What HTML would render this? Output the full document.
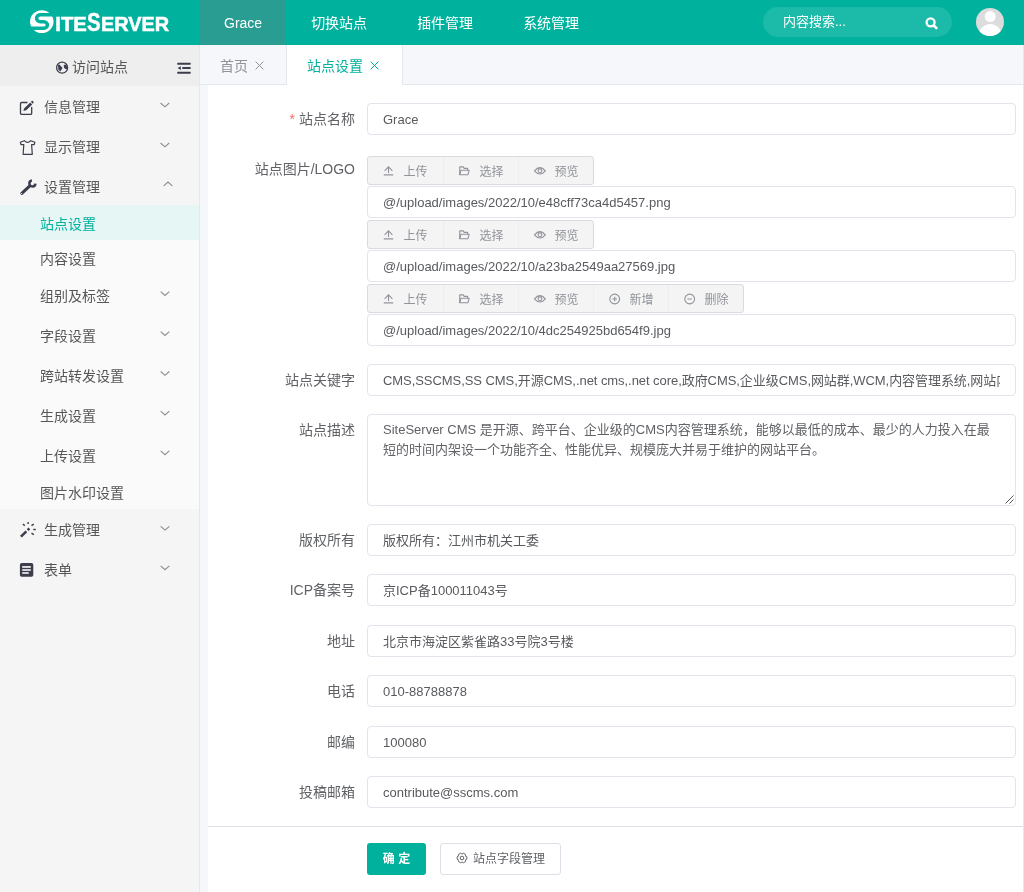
<!DOCTYPE html>
<html lang="zh-CN">
<head>
<meta charset="utf-8">
<title>SiteServer</title>
<style>
*{box-sizing:border-box;margin:0;padding:0}
html,body{width:1024px;height:892px;overflow:hidden;background:#fff}
body{font-family:"Liberation Sans","Noto Sans CJK SC",sans-serif;font-size:14px;color:#606266;position:relative}
#hd,#sb,#tabs,#main,#sbic{will-change:transform}
/* header */
#hd{position:absolute;left:0;top:0;width:1024px;height:45px;background:#00b19d;color:#fff}
#logo{position:absolute;left:0;top:0;width:200px;height:45px}
#nav{position:absolute;left:199px;top:0;height:45px;display:flex}
#nav div{height:45px;line-height:47px;padding:0 25px;font-size:14px;color:#fff;white-space:nowrap}
#nav div.on{background:#2a9d92;padding:0 24px 0 25px}
#search{position:absolute;left:763px;top:7px;width:189px;height:30px;border-radius:15px;background:#1cbaa8;color:#fff;font-size:13px;line-height:30px;padding-left:20px}
#search svg{position:absolute;left:162px;top:10px}
#avatar{position:absolute;left:976px;top:8px;width:28px;height:28px;border-radius:50%;background:#dcdcdc;overflow:hidden}
/* sidebar */
#sb{position:absolute;left:0;top:45px;width:200px;height:847px;background:#f5f5f5;border-right:1px solid #e4e7f0}
#sbtop{position:relative;height:41px;margin-bottom:-1px;background:#eeeeee;line-height:45px;font-size:14px;color:#555}
#sbtop .t{position:absolute;left:72px;top:0}
#sbtop svg.g{position:absolute;left:56px;top:16px}
#sbtop svg.m{position:absolute;left:177px;top:18px}
.mi{position:relative;height:40px;line-height:44px;font-size:14px;color:#565656;padding-left:44px}
.mi svg.ic{position:absolute;left:19px;top:14px}
.mi svg.ar{position:absolute;left:160px;top:15px}
#sub{background:#fafafa}
.si{position:relative;height:40px;line-height:44px;font-size:14px;color:#565656;padding-left:40px}
.si.s{height:35px;line-height:39px}
.si.on{background:#e6f6f5;color:#00b19d}
.si svg.ar{position:absolute;left:160px;top:15px}
/* tabs */
#tabs{position:absolute;left:200px;top:45px;width:824px;height:40px;background:#f5f7fa;border-bottom:1px solid #e4e7ed}
#tabs .tb{position:absolute;top:0;height:40px;line-height:42px;font-size:14px;color:#909399;padding-left:20px}
#tabs .tb.on{background:#fff;color:#00b19d;border-left:1px solid #e4e7ed;border-right:1px solid #e4e7ed;height:41px}
#tabs .x{position:relative;top:-1px;margin-left:7px}
/* main */
#gap{position:absolute;left:200px;top:85px;width:8px;height:807px;background:#f5f7fa}
#main{position:absolute;left:208px;top:85px;width:816px;height:807px;background:#fff}
.lb{position:absolute;left:0;width:147px;text-align:right;font-size:14px;color:#606266;line-height:32px;white-space:nowrap}
.lb i{color:#f56c6c;font-style:normal;margin-right:4px}
.in{position:absolute;left:159px;width:649px;height:32px;border:1px solid #e1e4eb;border-radius:4px;background:#fff;font-size:13px;line-height:31px;padding:0 15px;color:#585a5e;white-space:nowrap;overflow:hidden}
.bg{position:absolute;left:159px;height:29px;display:flex;border:1px solid #dadbde;border-radius:3px;background:#f4f4f5;overflow:hidden}
.bg div{width:75px;height:27px;line-height:31px;font-size:12px;color:#909399;position:relative;padding-left:35.5px;border-left:1px solid #eeeef0}
.bg div:first-child{border-left:0}
.bg div svg{position:absolute;left:14.5px;top:8px}
#ta{position:absolute;left:159px;top:329px;width:649px;height:92px;border:1px solid #e1e4eb;border-radius:4px;font-size:13px;line-height:19.5px;padding:5px 15px;color:#606266}
#hr{position:absolute;left:0;top:741px;width:815px;height:1px;background:#dcdfe6}
#ok{position:absolute;left:159px;top:758px;width:59px;height:32px;background:#00b19d;border-radius:3px;color:#fff;font-size:12px;line-height:32px;text-align:center;font-weight:bold}
#fm{position:absolute;left:232px;top:758px;width:121px;height:32px;border:1px solid #dcdfe6;border-radius:3px;color:#606266;font-size:12px;line-height:30px;padding-left:32px;background:#fff}
#fm svg{position:absolute;left:15.2px;top:8.2px}
</style>
</head>
<body>
<div id="hd">
  <div id="logo">
    <svg width="200" height="45" viewBox="0 0 200 45">
      <g>
        <ellipse cx="41.8" cy="21.6" rx="11.75" ry="11.4" fill="#fff"/>
        <path d="M54 14.86 H40.35 A3.77 3.41 0 0 0 40.35 21.68 H43.94 A3.66 3.25 0 0 1 43.94 28.17 H29" fill="none" stroke="#00b19d" stroke-width="3.5"/>
      </g>
      <text x="55.3" y="30.6" font-family="Liberation Sans, sans-serif" font-weight="bold" font-size="19.6" fill="#fff" stroke="#fff" stroke-width="0.5" textLength="31.6" lengthAdjust="spacingAndGlyphs">ITE</text>
      <text x="87.1" y="30.7" font-family="Liberation Sans, sans-serif" font-weight="bold" font-size="25" fill="#fff" stroke="#fff" stroke-width="0.4" textLength="13.6" lengthAdjust="spacingAndGlyphs">S</text>
      <text x="100.9" y="30.6" font-family="Liberation Sans, sans-serif" font-weight="bold" font-size="19.6" fill="#fff" stroke="#fff" stroke-width="0.5" textLength="68.2" lengthAdjust="spacingAndGlyphs">ERVER</text>
    </svg>
  </div>
  <div id="nav"><div class="on">Grace</div><div>切换站点</div><div>插件管理</div><div>系统管理</div></div>
  <div id="search">内容搜索...<svg width="13" height="13" viewBox="0 0 13 13"><circle cx="5.6" cy="5.3" r="4" fill="none" stroke="#fff" stroke-width="2.3"/><path d="M8.8 8.5 L11.4 11.1" stroke="#fff" stroke-width="2.6" stroke-linecap="round"/></svg></div>
  <div id="avatar"><svg width="28" height="28" viewBox="0 0 28 28"><circle cx="14.2" cy="8.6" r="5.5" fill="#fff"/><ellipse cx="14.2" cy="28" rx="11.5" ry="12.1" fill="#fff"/></svg></div>
</div>

<div id="sb">
  <div id="sbtop"><span class="t">访问站点</span></div>
  <div class="mi">信息管理</div>
  <div class="mi">显示管理</div>
  <div class="mi">设置管理</div>
  <div id="sub">
    <div class="si s on">站点设置</div>
    <div class="si s" style="height:34px">内容设置</div>
    <div class="si">组别及标签</div>
    <div class="si">字段设置</div>
    <div class="si">跨站转发设置</div>
    <div class="si">生成设置</div>
    <div class="si">上传设置</div>
    <div class="si s" style="height:35px">图片水印设置</div>
  </div>
  <div class="mi" style="height:39px;line-height:42px">生成管理</div>
  <div class="mi">表单</div>
</div>

<svg id="sbic" width="200" height="892" viewBox="0 0 200 892" style="position:absolute;left:0;top:0;pointer-events:none">
  <!-- globe -->
  <g fill="none" stroke="#3c3e4d" stroke-width="1.3">
    <circle cx="62.1" cy="67.7" r="5.5"/>
  </g>
  <path d="M57.9 65.2 L59.4 64.6 L62.6 68.1 L60.2 71.4 L58.4 69.4 Z" fill="#3c3e4d"/>
  <path d="M63.7 65 L66.4 64.4 L67.4 68.9 L65.4 68.9 L64 67.4 Z" fill="#3c3e4d"/>
  <!-- fold -->
  <g fill="#3c3e4d">
    <rect x="177.2" y="62.7" width="13.5" height="2" rx="0.6"/>
    <rect x="182.2" y="67.1" width="8.5" height="2" rx="0.6"/>
    <rect x="177.2" y="71.7" width="13.5" height="2" rx="0.6"/>
    <path d="M177.6 68.1 L180.8 66.2 L180.8 70 Z"/>
  </g>
  <!-- edit -->
  <path d="M27 102.5 H21.6 a1.1 1.1 0 0 0 -1.1 1.1 V113.2 a1.1 1.1 0 0 0 1.1 1.1 H30.6 a1.1 1.1 0 0 0 1.1 -1.1 V107.5" fill="none" stroke="#3c3e4d" stroke-width="1.3" stroke-linecap="round"/>
  <path d="M23.3 110.9 L24.3 108.2 L30.2 102.5 L32.2 104.5 L26.2 110.2 Z" fill="#3c3e4d"/>
  <path d="M30.9 101.8 L31.7 101.1 a0.9 0.9 0 0 1 1.2 0 L33.4 101.7 a0.9 0.9 0 0 1 0 1.2 L32.8 103.7 Z" fill="#3c3e4d"/>
  <!-- shirt -->
  <path d="M24.4 140.7 Q27.6 144.2 30.7 140.7 L34.9 142.2 L34.2 144.7 L31.6 144.6 L32.3 154.3 H23.1 L23.8 144.6 L21 144.7 L20.3 142.2 Z" fill="none" stroke="#3c3e4d" stroke-width="1.2" stroke-linejoin="round"/>
  <!-- wrench -->
  <path d="M21.8 193.3 L29.8 185.8" stroke="#3c3e4d" stroke-width="3.1" stroke-linecap="round" fill="none"/>
  <path d="M31.9 180.5 A3 3 0 1 0 35.4 183.6" stroke="#3c3e4d" stroke-width="2.5" fill="none"/>
  <circle cx="21.6" cy="193.5" r="0.6" fill="#f5f5f5"/>
  <!-- wand -->
  <path d="M20.9 536.7 L26.4 531.4" stroke="#3c3e4d" stroke-width="2.5" fill="none"/>
  <path d="M28.5 527.6 L30.2 529.3 L28.5 531 L26.8 529.3 Z" fill="#3c3e4d"/>
  <g stroke="#3c3e4d" stroke-width="1.4" fill="none">
    <path d="M28.1 522.1 V524"/>
    <path d="M22.9 524.1 L24.8 525.6"/>
    <path d="M31.5 525.6 L33.7 524.1"/>
    <path d="M33.2 529.5 H35.8"/>
    <path d="M31.5 533.2 L33.8 534.7"/>
  </g>
  <!-- form -->
  <rect x="19.9" y="563.1" width="13.4" height="13.6" rx="1.8" fill="#3c3e4d"/>
  <g fill="#f5f5f5">
    <rect x="22.2" y="566.1" width="8.6" height="1.7"/>
    <rect x="22.2" y="569.2" width="8.6" height="1.6"/>
    <rect x="22.2" y="572.2" width="6.6" height="1.6"/>
  </g>
  <!-- chevrons -->
  <g fill="none" stroke="#8a8c91" stroke-width="1.1">
    <path d="M160.6 103.0 L164.9 106.80000000000001 L169.20000000000002 103.0"/><path d="M160.6 143.0 L164.9 146.8 L169.20000000000002 143.0"/><path d="M163.7 185.9 L168 182.1 L172.3 185.9"/>
    <path d="M160.7 291.6 L165 295.4 L169.3 291.6"/><path d="M160.7 331.6 L165 335.4 L169.3 331.6"/><path d="M160.7 371.5 L165 375.29999999999995 L169.3 371.5"/><path d="M160.7 411.20000000000005 L165 415.0 L169.3 411.20000000000005"/><path d="M160.7 450.90000000000003 L165 454.7 L169.3 450.90000000000003"/>
    <path d="M160.7 526.3000000000001 L165 530.1 L169.3 526.3000000000001"/><path d="M160.7 565.9 L165 569.6999999999999 L169.3 565.9"/>
  </g>
</svg>
<div id="tabs">
  <div class="tb" style="left:0;width:86px">首页<svg class="x" width="9" height="9" viewBox="0 0 9 9"><path d="M0.6 0.6 L8.4 8.4 M8.4 0.6 L0.6 8.4" stroke="#909399" stroke-width="1" fill="none"/></svg></div>
  <div class="tb on" style="left:86px;width:117px">站点设置<svg class="x" width="9" height="9" viewBox="0 0 9 9"><path d="M0.6 0.6 L8.4 8.4 M8.4 0.6 L0.6 8.4" stroke="#00b19d" stroke-width="1" fill="none"/></svg></div>
</div>
<div id="gap"></div><div style="position:absolute;left:1023px;top:45px;width:1px;height:847px;background:#e4e7ed;z-index:5"></div>
<div id="main">
  <div class="lb" style="top:18px"><i>*</i>站点名称</div>
  <div class="in" style="top:18px">Grace</div>

  <div class="lb" style="top:68px">站点图片/LOGO</div>
  <div class="bg" style="top:71px"><div><svg width="12" height="12" viewBox="0 0 12 12" fill="none" stroke="#909399" stroke-width="1.1"><path d="M0.8 9.9 H10.2"/><path d="M5.5 1.9 V8"/><path d="M1.6 5.8 L5.5 1.9 L9.4 5.8"/></svg>上传</div><div><svg width="12" height="12" viewBox="0 0 12 12" fill="none" stroke="#909399" stroke-width="1.1" stroke-linejoin="round"><path d="M0.7 9.8 V1.9 H4.2 L5.2 3.4 H8.6 V5.2"/><path d="M0.7 9.8 L2 5.2 H10.2 L8.9 9.8 Z"/></svg>选择</div><div><svg width="12" height="12" viewBox="0 0 12 12" fill="none" stroke="#909399" stroke-width="1.1"><path d="M0.4 5.8 Q5.9 -0.6 11.4 5.8 Q5.9 12.2 0.4 5.8 Z"/><circle cx="5.9" cy="5.8" r="1.9"/></svg>预览</div></div>
  <div class="in" style="top:101px">@/upload/images/2022/10/e48cff73ca4d5457.png</div>
  <div class="bg" style="top:135px"><div><svg width="12" height="12" viewBox="0 0 12 12" fill="none" stroke="#909399" stroke-width="1.1"><path d="M0.8 9.9 H10.2"/><path d="M5.5 1.9 V8"/><path d="M1.6 5.8 L5.5 1.9 L9.4 5.8"/></svg>上传</div><div><svg width="12" height="12" viewBox="0 0 12 12" fill="none" stroke="#909399" stroke-width="1.1" stroke-linejoin="round"><path d="M0.7 9.8 V1.9 H4.2 L5.2 3.4 H8.6 V5.2"/><path d="M0.7 9.8 L2 5.2 H10.2 L8.9 9.8 Z"/></svg>选择</div><div><svg width="12" height="12" viewBox="0 0 12 12" fill="none" stroke="#909399" stroke-width="1.1"><path d="M0.4 5.8 Q5.9 -0.6 11.4 5.8 Q5.9 12.2 0.4 5.8 Z"/><circle cx="5.9" cy="5.8" r="1.9"/></svg>预览</div></div>
  <div class="in" style="top:165px">@/upload/images/2022/10/a23ba2549aa27569.jpg</div>
  <div class="bg" style="top:199px"><div><svg width="12" height="12" viewBox="0 0 12 12" fill="none" stroke="#909399" stroke-width="1.1"><path d="M0.8 9.9 H10.2"/><path d="M5.5 1.9 V8"/><path d="M1.6 5.8 L5.5 1.9 L9.4 5.8"/></svg>上传</div><div><svg width="12" height="12" viewBox="0 0 12 12" fill="none" stroke="#909399" stroke-width="1.1" stroke-linejoin="round"><path d="M0.7 9.8 V1.9 H4.2 L5.2 3.4 H8.6 V5.2"/><path d="M0.7 9.8 L2 5.2 H10.2 L8.9 9.8 Z"/></svg>选择</div><div><svg width="12" height="12" viewBox="0 0 12 12" fill="none" stroke="#909399" stroke-width="1.1"><path d="M0.4 5.8 Q5.9 -0.6 11.4 5.8 Q5.9 12.2 0.4 5.8 Z"/><circle cx="5.9" cy="5.8" r="1.9"/></svg>预览</div><div><svg width="12" height="12" viewBox="0 0 12 12" fill="none" stroke="#909399" stroke-width="1.1"><circle cx="5.7" cy="6" r="4.9"/><path d="M3.4 6 H8 M5.7 3.7 V8.3"/></svg>新增</div><div><svg width="12" height="12" viewBox="0 0 12 12" fill="none" stroke="#909399" stroke-width="1.1"><circle cx="5.7" cy="6" r="4.9"/><path d="M3.4 6 H8"/></svg>删除</div></div>
  <div class="in" style="top:229px">@/upload/images/2022/10/4dc254925bd654f9.jpg</div>

  <div class="lb" style="top:279px">站点关键字</div>
  <div class="in" style="top:279px"><div style="overflow:hidden;width:617px;letter-spacing:-0.06px">CMS,SSCMS,SS CMS,开源CMS,.net cms,.net core,政府CMS,企业级CMS,网站群,WCM,内容管理系统,网站内容管理系统</div></div>

  <div class="lb" style="top:329px">站点描述</div>
  <div id="ta">SiteServer CMS 是开源、跨平台、企业级的CMS内容管理系统，能够以最低的成本、最少的人力投入在最短的时间内架设一个功能齐全、性能优异、规模庞大并易于维护的网站平台。<svg width="10" height="10" viewBox="0 0 10 10" style="position:absolute;right:1px;bottom:1px"><path d="M1.5 9.5 L9.5 1.5 M5.5 9.5 L9.5 5.5" stroke="#555" stroke-width="1" fill="none"/></svg></div>

  <div class="lb" style="top:439px">版权所有</div>
  <div class="in" style="top:439px">版权所有：江州市机关工委</div>
  <div class="lb" style="top:489px">ICP备案号</div>
  <div class="in" style="top:489px">京ICP备100011043号</div>
  <div class="lb" style="top:540px">地址</div>
  <div class="in" style="top:540px">北京市海淀区紫雀路33号院3号楼</div>
  <div class="lb" style="top:590px">电话</div>
  <div class="in" style="top:590px">010-88788878</div>
  <div class="lb" style="top:641px">邮编</div>
  <div class="in" style="top:641px">100080</div>
  <div class="lb" style="top:691px">投稿邮箱</div>
  <div class="in" style="top:691px">contribute@sscms.com</div>

  <div id="hr"></div>
  <div id="ok">确 定</div>
  <div id="fm"><svg width="12" height="12" viewBox="0 0 12 12" fill="none" stroke="#606266" stroke-width="1"><path d="M9.29 4.10 Q10.18 3.96 10.85 4.79 L10.85 7.21 Q10.18 8.04 9.29 7.90 Q9.86 8.60 9.47 9.60 L7.38 10.81 Q6.32 10.64 6.00 9.80 Q5.68 10.64 4.62 10.81 L2.53 9.60 Q2.14 8.60 2.71 7.90 Q1.82 8.04 1.15 7.21 L1.15 4.79 Q1.82 3.96 2.71 4.10 Q2.14 3.40 2.53 2.40 L4.62 1.19 Q5.68 1.36 6.00 2.20 Q6.32 1.36 7.38 1.19 L9.47 2.40 Q9.86 3.40 9.29 4.10 Z" stroke-linejoin="round"/><circle cx="6" cy="6" r="1.8"/></svg>站点字段管理</div>
</div>
</body>
</html>
